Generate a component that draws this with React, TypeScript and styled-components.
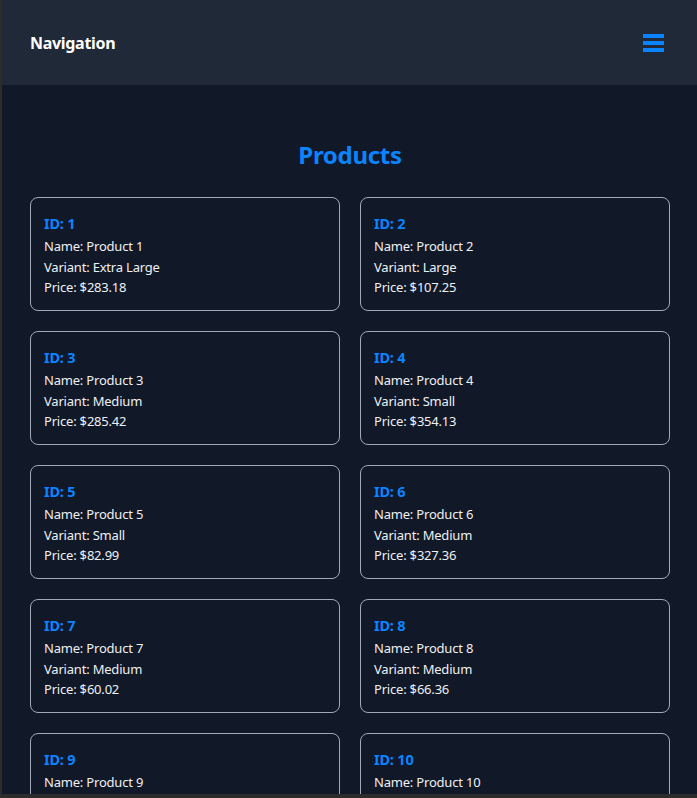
import React from "react";
import styled, { createGlobalStyle } from "styled-components";

const Global = createGlobalStyle`
  html, body { margin: 0; padding: 0; background: #111827; }
  body { font-family: "Noto Sans", "Open Sans", sans-serif; overflow: hidden; }
`;

const Frame = styled.div`
  height: 100vh;
  box-sizing: border-box;
  border-left: 2px solid #2c2c2c;
  border-bottom: 4px solid #2c2c2c;
  display: flex;
  flex-direction: column;
  overflow: hidden;
  background: #111827;
`;

const Header = styled.header`
  flex: 0 0 85px;
  display: flex;
  align-items: center;
  justify-content: space-between;
  padding: 0 33px 0 28px;
  background: #1f2937;
`;

const Brand = styled.div`
  color: #ffffff;
  font-size: 16px;
  font-weight: 700;
  letter-spacing: -0.3px;
`;

const MenuButton = styled.button`
  border: 0;
  padding: 0;
  background: transparent;
  display: flex;
  cursor: pointer;
`;

const Main = styled.main`
  flex: 1;
  padding: 54px 27px 0 28px;
  display: flex;
  flex-direction: column;
  gap: 26px;
`;

const Title = styled.h1`
  margin: 0;
  text-align: center;
  color: #0a84ff;
  font-size: 24px;
  line-height: 32px;
  font-weight: 700;
  letter-spacing: -0.3px;
`;

const Grid = styled.div`
  display: grid;
  grid-template-columns: 310px 310px;
  gap: 20px;
`;

const Card = styled.div`
  height: 114px;
  box-sizing: border-box;
  border: 1px solid #a3a9b4;
  border-radius: 8px;
  padding: 14px 13px;
  display: flex;
  flex-direction: column;
`;

const CardId = styled.div`
  color: #0a84ff;
  font-size: 14.5px;
  line-height: 22px;
  font-weight: 700;
  margin-bottom: 2px;
  letter-spacing: -0.2px;
`;

const Line = styled.div`
  color: #eef0f3;
  font-size: 13px;
  line-height: 20.5px;
  letter-spacing: -0.2px;
`;

const products = [
  { id: 1, variant: "Extra Large", price: "283.18" },
  { id: 2, variant: "Large", price: "107.25" },
  { id: 3, variant: "Medium", price: "285.42" },
  { id: 4, variant: "Small", price: "354.13" },
  { id: 5, variant: "Small", price: "82.99" },
  { id: 6, variant: "Medium", price: "327.36" },
  { id: 7, variant: "Medium", price: "60.02" },
  { id: 8, variant: "Medium", price: "66.36" },
  { id: 9, variant: "Large", price: "193.50" },
  { id: 10, variant: "Small", price: "148.72" },
];

export default function App() {
  return (
    <>
      <Global />
      <Frame>
        <Header>
          <Brand>Navigation</Brand>
          <MenuButton aria-label="menu">
            <svg width="21" height="18" viewBox="0 0 21 18">
              <rect x="0" y="0" width="21" height="4" fill="#0a84ff" />
              <rect x="0" y="7" width="21" height="4" fill="#0a84ff" />
              <rect x="0" y="14" width="21" height="4" fill="#0a84ff" />
            </svg>
          </MenuButton>
        </Header>
        <Main>
          <Title>Products</Title>
          <Grid>
            {products.map((p) => (
              <Card key={p.id}>
                <CardId>ID: {p.id}</CardId>
                <Line>Name: Product {p.id}</Line>
                <Line>Variant: {p.variant}</Line>
                <Line>Price: ${p.price}</Line>
              </Card>
            ))}
          </Grid>
        </Main>
      </Frame>
    </>
  );
}
